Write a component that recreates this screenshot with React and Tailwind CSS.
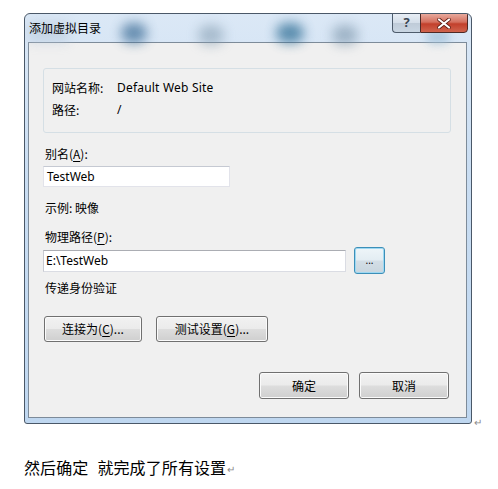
import React from "react";

const ui = { fontFamily: '"Segoe UI", "Noto Sans", "Noto Sans CJK SC", sans-serif' };
const cjk = { fontFamily: '"Noto Sans CJK SC", "Noto Sans", sans-serif' };

function WinButton({ children, className = "" }) {
  return (
    <div
      className={
        "flex items-center justify-center rounded-[3px] border border-[#707070] bg-[linear-gradient(180deg,#f2f2f2_0%,#ebebeb_48%,#dddddd_52%,#cfcfcf_100%)] shadow-[inset_0_0_0_1px_#fbfbfb] text-[12px] text-black " +
        className
      }
    >
      {children}
    </div>
  );
}

function U({ children }) {
  return <span className="underline underline-offset-2">{children}</span>;
}

export default function App() {
  return (
    <div className="min-h-[489px] w-[498px] bg-white pl-[24px] pt-[13px]" style={ui}>
      <div className="flex items-end">
        <div className="relative w-[448px] h-[411px] rounded-t-[6px] rounded-b-[3px] border border-[#4a5868] bg-[linear-gradient(180deg,#dbe8f6_0%,#c9ddf2_40%,#bfd7f0_100%)] pl-[3px] pr-[4px] pb-[5px] flex flex-col overflow-hidden">
          {/* title bar */}
          <div className="relative h-[28px] shrink-0 flex items-center">
            <div className="absolute left-[93px] top-[9px] w-[26px] h-[20px] rounded-full bg-[#3f6f98] blur-[6px] opacity-75" />
            <div className="absolute left-[170px] top-[11px] w-[26px] h-[20px] rounded-full bg-[#7f98ac] blur-[6px] opacity-55" />
            <div className="absolute left-[248px] top-[9px] w-[28px] h-[20px] rounded-full bg-[#2f6e95] blur-[6px] opacity-75" />
            <div className="absolute left-[304px] top-[11px] w-[26px] h-[20px] rounded-full bg-[#6f8aa0] blur-[6px] opacity-55" />
            <div className="absolute left-[398px] top-[16px] w-[24px] h-[14px] rounded-full bg-[#9fc0d8] blur-[4px] opacity-70" />
            <div className="absolute left-0 top-[8px] w-[40px] h-[20px] bg-[#b9c9da] blur-[6px] opacity-60" />
            <span className="relative pl-[1px] text-[12px] text-black" style={cjk}>添加虚拟目录</span>
            <div className="absolute right-[-1px] top-[-1px] flex h-[20px]">
              <div className="w-[28px] h-[20px] rounded-bl-[4px] border border-[#4e5c6c] border-r-0 bg-[linear-gradient(180deg,#e8eef5_0%,#d4dee9_48%,#bfcbd8_52%,#c9d6e3_100%)] flex items-center justify-center text-[13px] font-bold text-[#3a4552]" style={ui}>?</div>
              <div className="w-[48px] h-[20px] rounded-br-[4px] border border-[#4e2a26] bg-[linear-gradient(180deg,#e8a99c_0%,#d4705f_45%,#c2402c_55%,#d0644e_100%)] flex items-center justify-center">
                <svg width="14" height="11" viewBox="0 0 14 11">
                  <path d="M2 1.5 L12 9.5 M12 1.5 L2 9.5" stroke="#5a1c14" strokeWidth="3.6" strokeLinecap="round" />
                  <path d="M2 1.5 L12 9.5 M12 1.5 L2 9.5" stroke="#ffffff" strokeWidth="2.2" strokeLinecap="round" />
                </svg>
              </div>
            </div>
          </div>

          {/* content */}
          <div className="flex-1 border border-[#7d8b99] bg-[#f0f0f0] text-[12px] text-black flex flex-col" style={ui}>
            <div className="ml-[14px] mr-[15px] mt-[25px] h-[65px] rounded-[3px] border border-[#d5dfe5] pt-[8px] pl-[8px]">
              <div className="flex h-[22px] items-center">
                <span className="w-[65px]" style={cjk}>网站名称:</span>
                <span className="tracking-[0.2px]">Default Web Site</span>
              </div>
              <div className="flex h-[22px] items-center">
                <span className="w-[65px]" style={cjk}>路径:</span>
                <span>/</span>
              </div>
            </div>

            <div className="ml-[16px] mt-[13px] h-[16px] leading-[16px]" style={cjk}>别名(<U>A</U>):</div>
            <div className="ml-[14px] mt-[4px] w-[187px] h-[21px] border border-[#e2e3ea] border-t-[#c5c9d2] bg-white flex items-center pl-[3px]">TestWeb</div>

            <div className="ml-[16px] mt-[13px] h-[16px] leading-[16px]" style={cjk}>示例: 映像</div>
            <div className="ml-[16px] mt-[13px] h-[16px] leading-[16px]" style={cjk}>物理路径(<U>P</U>):</div>

            <div className="ml-[14px] mt-[2px] flex h-[27px] items-center">
              <div className="w-[303px] h-[22px] border border-[#dadce3] border-t-[#abadb3] border-l-[#c8cad1] bg-white flex items-center pl-[2px]">E:\TestWeb</div>
              <div className="ml-[8px] w-[31px] h-[27px] rounded-[3px] border border-[#3c8fb8] bg-[linear-gradient(180deg,#eef5f9_0%,#e3edf3_48%,#d3dee6_52%,#c9d6df_100%)] shadow-[inset_0_0_0_1px_#9ed8f2] flex items-center justify-center text-[10px] leading-none pb-[2px]">...</div>
            </div>

            <div className="ml-[16px] mt-[6px] h-[16px] leading-[16px]" style={cjk}>传递身份验证</div>

            <div className="ml-[15px] mt-[20px] flex gap-[14px]">
              <WinButton className="w-[98px] h-[26px]"><span style={cjk}>连接为(<U>C</U>)...</span></WinButton>
              <WinButton className="w-[112px] h-[26px]"><span style={cjk}>测试设置(<U>G</U>)...</span></WinButton>
            </div>

            <div className="mt-[30px] mr-[17px] flex justify-end gap-[10px]">
              <WinButton className="w-[90px] h-[27px]"><span style={cjk}>确定</span></WinButton>
              <WinButton className="w-[90px] h-[27px]"><span style={cjk}>取消</span></WinButton>
            </div>
          </div>
        </div>
        <span className="ml-[2px] mb-[-3px] text-[10px] text-[#8a8a8a] leading-none" style={ui}>↵</span>
      </div>

      <div className="mt-[33px] h-[20px] leading-[20px] text-[16px] text-black flex items-center tracking-[0.1px]" style={cjk}>
        <span>然后确定</span>
        <span className="ml-[9px]">就完成了所有设置</span>
        <span className="text-[10px] text-[#8a8a8a] ml-[1px] mt-[4px]" style={ui}>↵</span>
      </div>
    </div>
  );
}
